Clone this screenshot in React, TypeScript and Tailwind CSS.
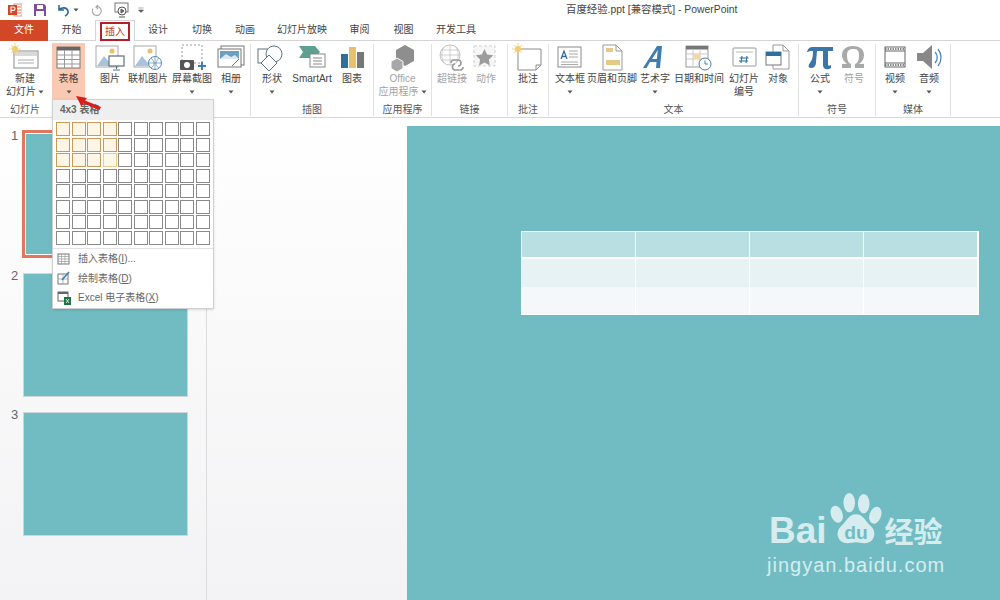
import React from 'react';

const FONT = "font-['Liberation_Sans','Noto_Sans_CJK_SC',sans-serif]";

function Caret({ className = '' }: { className?: string }) {
  return (
    <svg width="6" height="4" viewBox="0 0 6 4" className={className}>
      <path d="M0.5 0.5h5L3 3.5z" fill="#555" />
    </svg>
  );
}

function Divider() {
  return <div className="w-px h-[72px] bg-[#e2e2e2] mt-[2px] shrink-0" />;
}

/* ribbon icons, drawn in a 34x30 box */
const icons: Record<string, React.ReactNode> = {
  newSlide: (
    <>
      <rect x="6" y="8" width="24" height="17" fill="#fff" stroke="#8a8a8a" />
      <rect x="7" y="9" width="22" height="4" fill="#d9d9d9" />
      <path d="M10 17h16M10 20h16" stroke="#aaa" />
      <circle cx="7" cy="6" r="3" fill="#f2cc70" />
      <path d="M7 0v12M1 6h12M3 2l8 8M11 2l-8 8" stroke="#f2cc70" strokeWidth="0.8" />
    </>
  ),
  table: (
    <>
      <rect x="5" y="4" width="23" height="21" fill="#fff" stroke="#777" />
      <rect x="5" y="4" width="23" height="3.5" fill="#666" />
      <path d="M5 12h23M5 16.500h23M5 21h23M12.500 7v18M20 7v18" stroke="#999" />
    </>
  ),
  picture: (
    <>
      <rect x="3" y="3" width="22" height="21" fill="#fff" stroke="#a9a9a9" />
      <circle cx="19" cy="8" r="2.500" fill="#eac06a" />
      <path d="M4 23l7-10 6 7 3-2 4 5z" fill="#a9c3de" />
      <rect x="16" y="13" width="15" height="10" fill="#fff" stroke="#5c6f80" strokeWidth="1.200" />
      <path d="M23.500 23v3M20 27h7" stroke="#5c6f80" />
    </>
  ),
  online: (
    <>
      <rect x="3" y="3" width="22" height="21" fill="#fff" stroke="#a9a9a9" />
      <circle cx="19" cy="8" r="2.500" fill="#eac06a" />
      <path d="M4 23l7-10 6 7 3-2 4 5z" fill="#a9c3de" />
      <circle cx="24" cy="20" r="6.500" fill="#fff" stroke="#5b89ad" />
      <path d="M17.500 20h13M24 13.500v13M20 15c3 3 5 7 0 10M28 15c-3 3-5 7 0 10" fill="none" stroke="#5b89ad" strokeWidth="0.7" />
    </>
  ),
  screenshot: (
    <>
      <rect x="7" y="2" width="20" height="18" fill="#fff" stroke="#999" strokeDasharray="2 2" />
      <rect x="5" y="17" width="14" height="10" rx="1" fill="#555" />
      <circle cx="12" cy="22" r="3" fill="#fff" />
      <path d="M27 19v8M23 23h8" stroke="#3d7fb5" strokeWidth="2" />
    </>
  ),
  album: (
    <>
      <rect x="7" y="3" width="23" height="19" fill="#fff" stroke="#777" />
      <rect x="4" y="6" width="23" height="18" fill="#fff" stroke="#777" />
      <rect x="6" y="8" width="19" height="8" fill="#6c9fc0" />
      <path d="M6 16l6-5 5 3 4-2 4 4z" fill="#dfe8ee" />
      <path d="M18 23l7-7" stroke="#777" />
    </>
  ),
  shapes: (
    <>
      <rect x="3" y="6" width="15" height="14" fill="#fff" stroke="#5f7486" />
      <circle cx="19" cy="11" r="8" fill="#fff" stroke="#5f7486" />
      <path d="M14 12l8 8-8 8-8-8z" fill="#fff" stroke="#5f7486" />
    </>
  ),
  smartart: (
    <>
      <path d="M4 3h16l5 6-5 6H4l4-6z" fill="#5f9f8f" />
      <rect x="15" y="11" width="15" height="13" fill="#fff" stroke="#888" />
      <path d="M18 15h9M18 18h9M18 21h9" stroke="#888" />
    </>
  ),
  chart: (
    <>
      <rect x="6" y="11" width="7" height="14" fill="#2e6f9e" />
      <rect x="14" y="4" width="7" height="21" fill="#e8c06c" />
      <rect x="22" y="9" width="7" height="16" fill="#777" />
    </>
  ),
  office: (
    <>
      <path d="M19 2l9 5v11l-9 5-9-5V7z" fill="#8e8e8e" />
      <path d="M11 15l6 3.500v7l-6 3.500-6-3.500v-7z" fill="#a8a8a8" stroke="#fff" />
    </>
  ),
  link: (
    <>
      <circle cx="15" cy="12" r="10" fill="#fff" stroke="#c4c4c4" />
      <path d="M5 12h20M15 2v20M9 4c-3 5-3 11 0 16M21 4c3 5 3 11 0 16M6 7h18M6 17h18" fill="none" stroke="#c4c4c4" strokeWidth="0.8" />
      <path d="M16 20a3 3 0 0 1 3-3h4a3 3 0 0 1 0 6M28 24a3 3 0 0 1-3 3h-4a3 3 0 0 1-1-6" fill="none" stroke="#9b9b9b" strokeWidth="1.600" />
    </>
  ),
  action: (
    <>
      <rect x="5" y="3" width="21" height="20" fill="#f6f6f6" stroke="#cfcfcf" strokeDasharray="3 2" />
      <path d="M15.500 6l2.700 5.500 6 .8-4.300 4.200 1 6-5.400-2.900-5.400 2.900 1-6-4.300-4.200 6-.8z" fill="#9c9c9c" />
    </>
  ),
  comment: (
    <>
      <path d="M7 6h23v16l-5 5H7z" fill="#fff" stroke="#8a8a8a" />
      <path d="M25 27v-5h5" fill="none" stroke="#8a8a8a" />
      <circle cx="7" cy="6" r="3" fill="#f2cc70" />
      <path d="M7 0v12M1 6h12M3 2l8 8M11 2l-8 8" stroke="#f2cc70" strokeWidth="0.8" />
    </>
  ),
  textbox: (
    <>
      <rect x="5" y="4" width="23" height="20" fill="#fff" stroke="#8a8a8a" />
      <path d="M8 16l3-8 3 8M9 13.500h4" fill="none" stroke="#2e6f9e" strokeWidth="1.300" />
      <path d="M16 8h9M16 11h9M16 14h9M8 19h17M8 21.500h17" stroke="#aaa" />
    </>
  ),
  header: (
    <>
      <path d="M8 2h13l6 6v19H8z" fill="#fff" stroke="#999" />
      <path d="M21 2v6h6" fill="none" stroke="#999" />
      <rect x="11" y="5" width="7" height="4" fill="#e5c987" />
      <rect x="11" y="17" width="14" height="5" fill="#e5c987" />
    </>
  ),
  wordart: (
    <path d="M5 25L19 3h5l-2 22h-4l.5-6H12l-3.500 6zM14 16h4.800l1-9z" fill="#3f7cb0" />
  ),
  date: (
    <>
      <rect x="4" y="3" width="22" height="21" fill="#fff" stroke="#999" />
      <rect x="4" y="3" width="22" height="3.500" fill="#777" />
      <path d="M4 11h22M4 16h22M11 6v18M18 6v18" stroke="#c9c9c9" />
      <rect x="11" y="11" width="7" height="5" fill="#f0d9a6" />
      <circle cx="23" cy="21" r="6" fill="#fff" stroke="#4d7fa8" />
      <path d="M23 17.500V21h3" fill="none" stroke="#4d7fa8" />
    </>
  ),
  number: (
    <>
      <rect x="6" y="5" width="23" height="18" rx="1" fill="#fff" stroke="#999" />
      <path d="M9 9h17" stroke="#bbb" />
      <path d="M15 13l-1 7M20 13l-1 7M12.500 15h9M12 18h9" stroke="#2e6f9e" strokeWidth="1.100" />
    </>
  ),
  object: (
    <>
      <path d="M12 2h10l6 6v18H12z" fill="#fff" stroke="#999" />
      <path d="M22 2v6h6" fill="none" stroke="#999" />
      <rect x="5" y="9" width="15" height="13" fill="#fff" stroke="#777" />
      <rect x="5" y="9" width="15" height="4" fill="#2e6f9e" />
    </>
  ),
  pi: (
    <path d="M4 9c1-4 3-5 6-5h20v4h-5v13c0 2 1 2 3 1v3c-3 2-8 2-8-3V8h-6l-1 11c0 4-2 6-5 6s-3-3-1-5c2-3 3-6 3-12H8c-1 0-2 0-3 1z" fill="#3a76a8" />
  ),
  omega: (
    <path d="M5 25v-4h5c-3-2-5-5-5-9 0-6 5-9 11-9s11 3 11 9c0 4-2 7-5 9h5v4H18v-4c3-1 4-4 4-9s-2-6-6-6-6 2-6 6 1 8 4 9v4z" fill="#a9a9a9" />
  ),
  video: (
    <>
      <rect x="7" y="4" width="20" height="20" fill="#fff" stroke="#666" />
      <path d="M7 8h20M7 20h20" stroke="#666" />
      <path d="M7 6h20M7 22h20" stroke="#666" strokeWidth="1.500" strokeDasharray="1.500 1" />
    </>
  ),
  audio: (
    <>
      <path d="M5 10h6l9-8v24l-9-8H5z" fill="#888" />
      <path d="M23 9c3 3 3 8 0 11M26 6c4 5 4 12 0 17" fill="none" stroke="#4d88b8" strokeWidth="1.300" />
    </>
  ),
};

type Cmd = {
  icon: string;
  lines: string[];
  w: number;
  caret?: boolean;
  inlineCaret?: boolean;
  muted?: boolean;
  active?: boolean;
};

function RibbonCmd({ icon, lines, w, caret, inlineCaret, muted, active }: Cmd) {
  return (
    <div
      className={`flex flex-col items-center shrink-0 ${active ? 'bg-[#f9c9b3] h-[58px]' : 'h-[57px]'}`}
      style={{ width: w }}
    >
      <svg width="34" height="30" viewBox="0 0 34 30" className="shrink-0">
        {icons[icon]}
      </svg>
      <div className={`mt-[-1px] text-center text-[10px] leading-[13px] whitespace-nowrap ${muted ? 'text-[#a3a3a3]' : 'text-[#444]'}`}>
        {lines.map((l, i) => (
          <div key={i} className="flex items-center justify-center gap-[2px]">
            {l}
            {inlineCaret && i === lines.length - 1 && <Caret />}
          </div>
        ))}
      </div>
      {caret && <Caret className="mt-[5px]" />}
    </div>
  );
}

function Group({ label, w, cmds }: { label: string; w: number; cmds: Cmd[] }) {
  return (
    <div className="flex flex-col shrink-0 h-[76px]" style={{ width: w }}>
      <div className="flex h-[60px] pt-[1px]">
        {cmds.map(c => (
          <RibbonCmd key={c.icon} {...c} />
        ))}
      </div>
      <div className="text-center text-[10px] leading-[14px] text-[#555] mt-[1px]">{label}</div>
    </div>
  );
}

const tabs = [
  { label: '开始', w: 47 },
  { label: '插入', w: 40, active: true },
  { label: '设计', w: 46 },
  { label: '切换', w: 42 },
  { label: '动画', w: 44 },
  { label: '幻灯片放映', w: 70 },
  { label: '审阅', w: 45 },
  { label: '视图', w: 43 },
  { label: '开发工具', w: 62 },
];

function TitleBar() {
  return (
    <div className="h-[20px] flex items-center pl-[8px] relative">
      <svg width="14" height="14" viewBox="0 0 14 14">
        <rect x="6" y="1" width="8" height="12" fill="#fff" stroke="#c9a08f" />
        <path d="M9 4h4M9 7h4M9 10h4" stroke="#d24726" strokeWidth="0.800" />
        <rect x="0" y="2" width="9" height="10" fill="#d24726" />
        <path d="M3 10V4h2.300a1.700 1.700 0 0 1 0 3.400H3" fill="none" stroke="#fff" strokeWidth="1.100" />
      </svg>
      <svg width="14" height="14" viewBox="0 0 14 14" className="ml-[11px]">
        <path d="M1 1h10l2 2v10H1z" fill="#7b4f9d" />
        <rect x="4" y="2" width="6" height="4" fill="#fff" />
        <rect x="3" y="8" width="8" height="5" fill="#fff" />
      </svg>
      <svg width="14" height="14" viewBox="0 0 14 14" className="ml-[9px]">
        <path d="M3 2v5h5M3 7c2-3 8-3 9 1 .5 2-1 4-3 5" fill="none" stroke="#2b6b9e" strokeWidth="1.600" />
      </svg>
      <Caret className="ml-[3px]" />
      <svg width="14" height="14" viewBox="0 0 14 14" className="ml-[11px]">
        <path d="M8 2l-2 2 2 2M6 3.500a4.500 4.500 0 1 1-3 2" fill="none" stroke="#a8a8a8" strokeWidth="1.200" />
      </svg>
      <svg width="18" height="18" viewBox="0 0 18 18" className="ml-[9px]">
        <rect x="2" y="2" width="13" height="9" fill="#fff" stroke="#777" />
        <circle cx="9" cy="10" r="4" fill="#fff" stroke="#555" />
        <path d="M8 8l3 2-3 2zM6 16h6" stroke="#555" fill="#777" />
      </svg>
      <svg width="6" height="6" viewBox="0 0 6 6" className="ml-[7px]">
        <path d="M0.500 1h5M0.500 3h5L3 5.500z" fill="#555" stroke="#555" strokeWidth="0.500" />
      </svg>
      <div className="absolute left-[566px] top-[3px] text-[10.400px] leading-[14px] text-[#444] whitespace-nowrap">
        百度经验.ppt [兼容模式] - PowerPoint
      </div>
    </div>
  );
}

function TabRow() {
  return (
    <div className="h-[21px] flex border-b border-[#d4d4d4] relative z-10">
      <div className="w-[48px] h-[21px] bg-[#d24726] text-white text-[10px] leading-[20px] text-center">文件</div>
      {tabs.map(t => (
        <div
          key={t.label}
          className={`text-[10px] leading-[20px] text-center text-[#444] ${t.active ? 'h-[21px] bg-white border-x border-t border-[#d4d4d4] pt-[1px]' : ''}`}
          style={{ width: t.w }}
        >
          {t.active ? (
            <span className="block mx-auto w-[30px] h-[19px] border-2 border-[#b71c2c] text-[#c0392b] leading-[15px]">{t.label}</span>
          ) : (
            t.label
          )}
        </div>
      ))}
    </div>
  );
}

function Ribbon() {
  return (
    <div className="h-[77px] bg-white flex pl-[2px] border-b border-[#d8d8d8] pt-[1px]">
      <Group label="幻灯片" w={46} cmds={[{ icon: 'newSlide', lines: ['新建', '幻灯片'], w: 46, inlineCaret: true }]} />
      <div className="w-[4px]" />
      <Group label="" w={33} cmds={[{ icon: 'table', lines: ['表格'], w: 33, caret: true, active: true }]} />
      <div className="w-[8px]" />
      <Group
        label=""
        w={157}
        cmds={[
          { icon: 'picture', lines: ['图片'], w: 34 },
          { icon: 'online', lines: ['联机图片'], w: 42 },
          { icon: 'screenshot', lines: ['屏幕截图'], w: 46, caret: true },
          { icon: 'album', lines: ['相册'], w: 32, caret: true },
        ]}
      />
      <Divider />
      <Group
        label="插图"
        w={122}
        cmds={[
          { icon: 'shapes', lines: ['形状'], w: 42, caret: true },
          { icon: 'smartart', lines: ['SmartArt'], w: 38 },
          { icon: 'chart', lines: ['图表'], w: 42 },
        ]}
      />
      <Divider />
      <Group label="应用程序" w={57} cmds={[{ icon: 'office', lines: ['Office', '应用程序'], w: 57, inlineCaret: true, muted: true }]} />
      <Divider />
      <Group
        label="链接"
        w={75}
        cmds={[
          { icon: 'link', lines: ['超链接'], w: 40, muted: true },
          { icon: 'action', lines: ['动作'], w: 28, muted: true },
        ]}
      />
      <Divider />
      <Group label="批注" w={40} cmds={[{ icon: 'comment', lines: ['批注'], w: 40 }]} />
      <Divider />
      <Group
        label="文本"
        w={249}
        cmds={[
          { icon: 'textbox', lines: ['文本框'], w: 42, caret: true },
          { icon: 'header', lines: ['页眉和页脚'], w: 42 },
          { icon: 'wordart', lines: ['艺术字'], w: 44, caret: true },
          { icon: 'date', lines: ['日期和时间'], w: 44 },
          { icon: 'number', lines: ['幻灯片', '编号'], w: 46 },
          { icon: 'object', lines: ['对象'], w: 22 },
        ]}
      />
      <Divider />
      <Group
        label="符号"
        w={76}
        cmds={[
          { icon: 'pi', lines: ['公式'], w: 42, caret: true },
          { icon: 'omega', lines: ['符号'], w: 26, muted: true },
        ]}
      />
      <Divider />
      <Group
        label="媒体"
        w={74}
        cmds={[
          { icon: 'video', lines: ['视频'], w: 38, caret: true },
          { icon: 'audio', lines: ['音频'], w: 30, caret: true },
        ]}
      />
      <Divider />
    </div>
  );
}

function Thumb({ n, selected }: { n: number; selected?: boolean }) {
  return (
    <div className="flex items-start">
      <div className={`w-[23px] pl-[11px] text-[13px] leading-[16px] text-[#666] ${selected ? '-mt-[2px]' : '-mt-[5px]'}`}>{n}</div>
      {selected ? (
        <div className="w-[167px] h-[128px] border-[3px] border-[#e2775c] p-px -ml-px">
          <div className="w-full h-full bg-[#71bcc3]" />
        </div>
      ) : (
        <div className="w-[165px] h-[124px] bg-[#71bcc3] border border-[#cfd6d8]" />
      )}
    </div>
  );
}

function TableMenu() {
  const cells = Array.from({ length: 80 }, (_, i) => i);
  return (
    <div className="absolute left-[52px] top-[99px] w-[162px] h-[210px] bg-white border border-[#d0d0d0] shadow-sm z-20">
      <div className="h-[20px] bg-[#efefef] pl-[7px] text-[10px] leading-[20px] font-bold text-[#666]">4x3 表格</div>
      <div className="grid grid-cols-[repeat(10,15.500px)] auto-rows-[15.500px] pl-[3px] pt-[2px]">
        {cells.map(i => {
          const hot = i % 10 < 4 && i < 30;
          return (
            <div key={i} className={`w-[14px] h-[14px] border ${hot ? (i === 23 ? 'border-[#e8cf8c] bg-[#fdf8e8]' : 'border-[#c99a55] bg-[#fdf6e6]') : 'border-[#8a8a8a] bg-white'}`} />
          );
        })}
      </div>
      <div className="h-px bg-[#e2e2e2] mt-[2px]" />
      <div>
        <MenuRow text="插入表格(" hot="I" tail=")...">
          <rect x="1" y="2" width="11" height="10" fill="#fff" stroke="#777" />
          <path d="M1 4.500h11M1 7h11M1 9.500h11M4.500 2v10M8 2v10" stroke="#999" strokeWidth="0.700" />
        </MenuRow>
        <MenuRow text="绘制表格(" hot="D" tail=")">
          <rect x="1" y="3" width="10" height="10" fill="#fff" stroke="#777" />
          <path d="M1 8h10M6 3v10" stroke="#999" strokeWidth="0.700" />
          <path d="M5 9l7-8" stroke="#3d7fb5" strokeWidth="1.600" />
        </MenuRow>
        <MenuRow text="Excel 电子表格(" hot="X" tail=")">
          <rect x="1" y="1" width="10" height="9" fill="#fff" stroke="#666" />
          <rect x="1" y="1" width="10" height="2" fill="#666" />
          <rect x="7" y="6" width="7" height="8" fill="#1f7244" />
          <path d="M9 8l3 4M12 8l-3 4" stroke="#fff" strokeWidth="0.800" />
        </MenuRow>
      </div>
    </div>
  );
}

function MenuRow({ text, hot, tail, children }: { text: string; hot: string; tail: string; children: React.ReactNode }) {
  return (
    <div className="h-[19.500px] flex items-center pl-[4px]">
      <svg width="14" height="14" viewBox="0 0 14 14" className="shrink-0">{children}</svg>
      <span className="ml-[7px] text-[10px] text-[#666] whitespace-nowrap">
        {text}<u>{hot}</u>{tail}
      </span>
    </div>
  );
}

function BaiduMark() {
  return (
    <div className="absolute left-[769px] top-[490px] text-[#d6ecee] z-10">
      <div className="flex items-end h-[62px]">
        <span className="text-[37px] leading-[42px] font-bold">Bai</span>
        <svg width="54" height="62" viewBox="0 0 56 62" className="ml-[2px] shrink-0">
          <ellipse cx="8" cy="24" rx="6" ry="9" fill="#d6ecee" transform="rotate(-20 8 24)" />
          <ellipse cx="21" cy="12" rx="6" ry="10" fill="#d6ecee" />
          <ellipse cx="36" cy="13" rx="6" ry="10" fill="#d6ecee" />
          <ellipse cx="48" cy="25" rx="6" ry="9" fill="#d6ecee" transform="rotate(20 48 25)" />
          <path d="M28 24c8 0 10 8 16 13 6 6 3 17-7 17-4 0-6-1-9-1s-5 1-9 1C9 54 6 43 12 37c6-5 8-13 16-13z" fill="#d6ecee" />
          <text x="28" y="50" textAnchor="middle" fontSize="20" fontWeight="700" fill="#71bcc3">du</text>
        </svg>
        <span className="text-[29px] leading-[38px] font-bold ml-[2px] whitespace-nowrap">经验</span>
      </div>
      <div className="text-[20px] leading-[22px] tracking-[1px] -ml-[2px] mt-[2px] whitespace-nowrap">jingyan.baidu.com</div>
    </div>
  );
}

export default function App() {
  return (
    <div className={`relative w-[1000px] h-[600px] overflow-hidden bg-white ${FONT}`}>
      <TitleBar />
      <TabRow />
      <Ribbon />

      <div className="flex h-[482px] bg-linear-to-b from-white to-[#f3f2f4]">
        <div className="w-[207px] shrink-0 border-r border-[#dcdcdc] flex flex-col gap-[15px] pt-[12px]">
          <Thumb n={1} selected />
          <Thumb n={2} />
          <Thumb n={3} />
        </div>
        <div className="flex-1 pl-[200px] pt-[8px]">
          <div className="w-[593px] h-[474px] bg-[#71bcc3] pt-[105px] pl-[114px]">
            <div className="w-[458px] h-[84px] grid grid-cols-4 grid-rows-[27px_28px_27px] border border-white">
              {[0, 1, 2, 3].map(i => (
                <div key={i} className="bg-[#b9dfe3] border-b-2 border-white border-r last:border-r-0" />
              ))}
              {[0, 1, 2, 3].map(i => (
                <div key={i} className="bg-[#e7f2f4] border-r border-white last:border-r-0" />
              ))}
              {[0, 1, 2, 3].map(i => (
                <div key={i} className="bg-[#f4f8fb] border-r border-white last:border-r-0" />
              ))}
            </div>
          </div>
        </div>
      </div>

      <TableMenu />

      <svg width="32" height="20" viewBox="0 0 32 20" className="absolute left-[72px] top-[93px] z-30">
        <path d="M4 3l11 2-2 2.500 16 6.500-1.500 3-16-6.500-2 3z" fill="#d81e1e" />
      </svg>

      <BaiduMark />
    </div>
  );
}
